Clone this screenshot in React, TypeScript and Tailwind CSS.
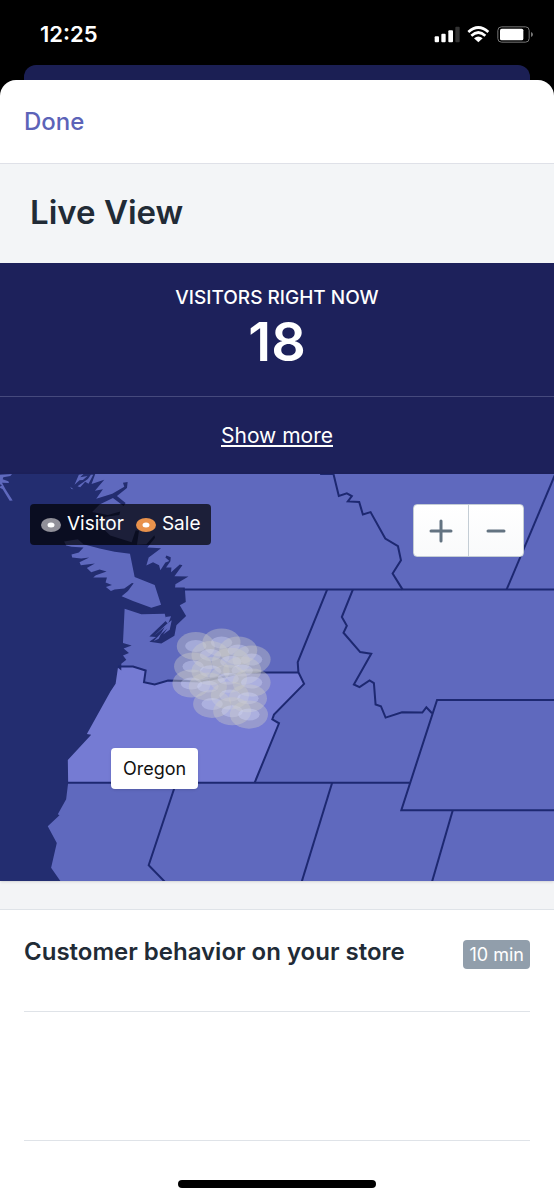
import React, { useState } from 'react';

const VISITORS: [number, number][] = [
  [588, 527], [665, 516], [632, 554], [715, 540], [755, 567],
  [693, 574], [580, 588], [632, 602], [727, 600], [575, 639], [624, 648],
  [685, 625], [755, 636], [690, 675], [744, 683], [637, 700], [697, 722], [747, 732],
];

const BORDERS = [
  'M550 358H1662',
  'M960 12H1000L1016 78L1040 70L1055 78L1043 94L1077 96L1088 133L1111 126L1155 205L1193 228L1202 270L1177 310L1207 358',
  'M1664 12L1518 358',
  'M981 358L893 575L895 605L912 640L822 732L817 746L837 758L764 936',
  'M355 588H400L438 600L433 635L465 642L505 630L605 633L680 617L730 606H895',
  'M1058 358L1025 440L1040 466L1030 487L1080 545L1113 550L1061 642L1078 650L1108 630L1121 638L1126 702L1142 707L1156 741L1205 725L1266 726L1278 710L1295 728',
  'M1662 688H1310L1203 1018H1662',
  'M205 936H1228',
  'M529 936L447 1183L495 1232',
  'M996 936L905 1232',
  'M1357 1018L1295 1232',
];

const StatusIcons = () => (
  <svg className="h-[18px] w-[99px]" viewBox="41 30 297 54" aria-hidden="true">
    <g fill="#fff">
      <rect x="43" y="64" width="13" height="18" rx="3" />
      <rect x="63" y="56" width="13" height="26" rx="3" />
      <rect x="84" y="46" width="14" height="36" rx="3" />
      <rect x="105" y="35" width="13" height="47" rx="3" fill="#333" />
      <path d="M174 82L161 70Q174 59 187 70Z" />
      <rect x="239" y="41" width="70" height="35" rx="5" />
    </g>
    <g fill="none" stroke="#fff" strokeWidth="8">
      <path d="M144 51Q174 24 204 51" />
      <path d="M153 62Q174 43 195 62" />
    </g>
    <rect x="232.500" y="35.500" width="94" height="46" rx="11" fill="none" stroke="#777" strokeWidth="3" />
    <path d="M332 51Q338 53 338 58.500Q338 64 332 66Z" fill="#777" />
  </svg>
);

const Dot = ({ color }: { color: string }) => (
  <svg className="h-[14px] w-5" viewBox="0 0 20 14" aria-hidden="true">
    <ellipse cx="10" cy="7" rx="10" ry="7" fill={color} />
    <ellipse cx="10" cy="7" rx="3.500" ry="2.500" fill="#fff" />
  </svg>
);

const RegionMap = () => (
  <svg className="block h-full w-full" viewBox="0 12 1662 1218" preserveAspectRatio="xMidYMid slice" role="img" aria-label="Visitor map">
    <rect y="12" width="1662" height="1218" fill="#5f69be" />
    {/* Oregon */}
    <path
      fill="#757bd3"
      d="M345 588H400L438 600L433 635L465 642L505 630L605 633L680 617L730 606H895L912 640L822 732L817 746L837 758L764 936H190V860L340 650Z"
    />
    {/* Ocean and the inlets */}
    <path
      fill="#232d70"
      d="M0 12H287L276 42L314 29L286 62L310 58L290 86L338 71L374 50L370 38L384 36L382 54L352 78L378 99L372 108L340 84L300 103L278 126L325 135L362 124L359 135L320 140L292 158L332 196L396 216L408 180L418 182L412 224L440 222L464 195L466 203L443 232L484 234L447 262L440 286L460 276L478 285L482 300L497 277L509 272L497 262L500 256L513 261L512 273L499 292L515 292L514 306L540 283L548 285L524 318L566 319L527 342L526 352L555 352L558 395L540 405L559 437L530 465L524 496L485 519L449 514L469 500L449 498L500 450L495 430L425 432L375 415L370 518L396 525L372 534L388 548L370 555L380 568L365 580V600L355 592L348 640L333 662L262 790L275 792L205 868L206 936L200 985L175 1030L180 1033L145 1066L172 1116L155 1190L184 1232H0Z"
    />
    {/* Vancouver Island and the islets */}
    <g fill="#5f69be">
      <path d="M194 214L235 207L252 222L300 235L345 245L391 251L405 320L465 344L484 403L455 412L400 392L366 378L385 362L402 339L397 338L374 355L345 358L334 362L319 350L337 344L318 337L322 322L281 322L289 315L321 304L300 298L275 306L262 293L286 280L262 283L244 285L240 276L269 262L245 265L218 262L216 253L238 247L252 232L216 230L200 226Z" />
      <path d="M0 14L38 12L33 18L12 22L10 28L27 34L29 39L8 38L20 60L40 91L31 92L10 58L0 52L8 46L0 42Z" />
      <path d="M225 44L238 14L252 12L242 22L264 18L250 30L240 31Z" />
      <path d="M234 49L265 27L274 14L281 14L267 41L257 35L242 52Z" />
      <path d="M212 50L222 58L216 57Z" />
      <path d="M497 440L514 438L505 460L497 452Z" />
      <path d="M463 496L502 460L516 450L510 478L490 492L503 474L482 492L495 470Z" />
      <path d="M462 512L485 488L477 505Z" />
    </g>
    <g fill="none" stroke="#1d2871" strokeWidth="6">
      {BORDERS.map(d => (
        <path key={d} d={d} />
      ))}
    </g>
    {VISITORS.map(([x, y]) => (
      <g key={`${x}-${y}`}>
        <ellipse cx={x} cy={y} rx="57" ry="42" fill="#cbcbc9" fillOpacity="0.4" />
        <ellipse cx={x} cy={y} rx="32" ry="18" fill="#d4d8ff" fillOpacity="0.36" />
      </g>
    ))}
  </svg>
);

const App: React.FC = () => {
  const [expanded, setExpanded] = useState(false);

  return (
    <div className="flex min-h-screen flex-col bg-black font-[Inter,sans-serif] text-[#212b36]">
      {/* Status bar */}
      <div className="flex h-[65px] items-center justify-between pt-[2px] pr-[21px] pl-10 text-white">
        <span className="text-[22px] leading-7 font-semibold">12:25</span>
        <StatusIcons />
      </div>
      <div className="mx-6 h-[15px] rounded-t-xl bg-[#1b1f54]" />

      <main className="flex flex-1 flex-col rounded-t-2xl bg-white">
        <header className="flex h-[84px] items-center border-b border-[#dfe1e8] px-6">
          <button type="button" className="text-2xl font-medium text-[#5c63b8]">Done</button>
        </header>

        <div className="flex h-[99px] items-center bg-[#f3f5f7] px-[30px] pb-1">
          <h1 className="text-[33px] leading-10 font-semibold">Live View</h1>
        </div>

        <section className="bg-[#1d215b] text-center text-white">
          <div className="h-[134px] border-b border-[#464a7d] pt-[23px]">
            <h2 className="text-[19px] leading-6 font-medium">VISITORS RIGHT NOW</h2>
            <p className="text-[54px] leading-[64px] font-semibold">18</p>
          </div>
          <div className="flex h-[77px] items-center justify-center">
            <button
              type="button"
              className="text-[21px] leading-7 underline underline-offset-2"
              onClick={() => setExpanded(!expanded)}
              aria-expanded={expanded}
            >
              Show more
            </button>
          </div>
        </section>

        <section className="relative h-[407px] shadow-sm">
          <RegionMap />
          <div className="absolute top-[30px] left-[30px] flex h-[41px] items-center gap-3 rounded bg-black/70 px-[11px] text-[19px] text-white">
            <span className="flex items-center gap-[6px]"><Dot color="#919099" /> Visitor</span>
            <span className="flex items-center gap-[6px]"><Dot color="#e9924c" /> Sale</span>
          </div>
          <div className="absolute top-[30px] right-[30px] flex h-[53px] w-[111px] divide-x divide-[#c4cdd5] rounded border border-[#c4cdd5] bg-linear-to-b from-white to-[#f9fafb]">
            <button type="button" aria-label="Zoom in" className="flex flex-1 items-center justify-center">
              <svg className="size-6" viewBox="0 0 24 24" stroke="#637381" strokeWidth="3" strokeLinecap="round">
                <path d="M2 12H22M12 2V22" />
              </svg>
            </button>
            <button type="button" aria-label="Zoom out" className="flex flex-1 items-center justify-center">
              <svg className="size-6" viewBox="0 0 24 24" stroke="#637381" strokeWidth="3" strokeLinecap="round">
                <path d="M4 12H20" />
              </svg>
            </button>
          </div>
          <div className="absolute top-[274px] left-[111px] rounded bg-white px-3 text-lg leading-[41px] text-[#111] shadow">
            Oregon
          </div>
        </section>

        <div className="h-7 bg-[#f3f4f6]" />

        <section className="flex-1 border-t border-[#dfe3e8] px-6">
          <div className="flex h-[102px] items-start justify-between border-b border-[#dfe3e8] pt-[26px]">
            <h2 className="text-2xl leading-8 font-semibold">Customer behavior on your store</h2>
            <span className="mt-1 rounded bg-[#919eab] px-[6px] text-lg leading-[29px] text-white">10 min</span>
          </div>
          <div className="h-[129px] border-b border-[#dfe3e8]" />
        </section>
        <div className="flex h-5 justify-center">
          <div className="h-2 w-[198px] rounded-full bg-black" />
        </div>
      </main>
    </div>
  );
};

export default App;
